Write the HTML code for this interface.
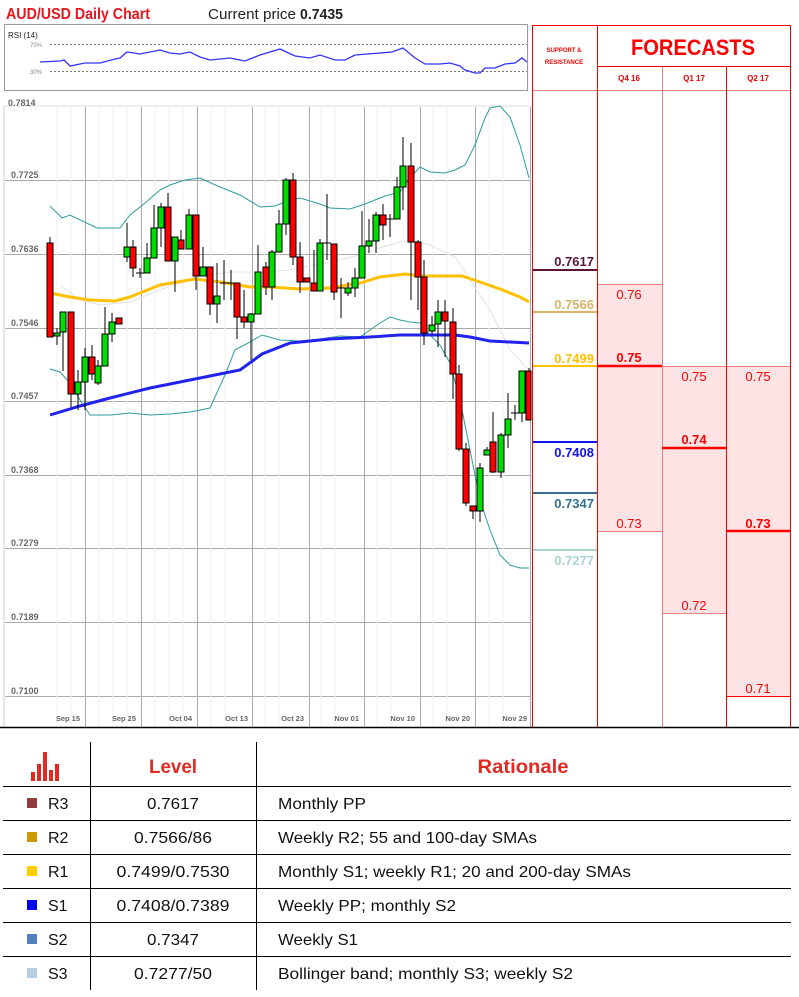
<!DOCTYPE html>
<html><head><meta charset="utf-8"><style>
html,body{margin:0;padding:0;background:#fff;}
svg{display:block;font-family:"Liberation Sans",sans-serif;}
</style></head><body>
<svg width="799" height="997" viewBox="0 0 799 997" xmlns="http://www.w3.org/2000/svg">
<rect width="799" height="997" fill="#fff"/>
<!-- title -->
<text x="6" y="19" font-size="16" font-weight="bold" fill="#e8141e" textLength="144" lengthAdjust="spacingAndGlyphs">AUD/USD Daily Chart</text>
<text x="208" y="19" font-size="15" fill="#222" textLength="88" lengthAdjust="spacingAndGlyphs">Current price</text>
<text x="300" y="19" font-size="15" font-weight="bold" fill="#222" textLength="43" lengthAdjust="spacingAndGlyphs">0.7435</text>

<!-- RSI box -->
<rect x="4.5" y="24.5" width="523" height="66" fill="#fff" stroke="#999"/>
<text x="8" y="38" font-size="8" fill="#222">RSI (14)</text>
<text x="30" y="47" font-size="6" fill="#888">70%</text>
<text x="30" y="74" font-size="6" fill="#888">30%</text>
<line x1="50" y1="44.5" x2="527" y2="44.5" stroke="#777" stroke-dasharray="2,2"/>
<line x1="50" y1="71.5" x2="527" y2="71.5" stroke="#777" stroke-dasharray="2,2"/>
<polyline fill="none" stroke="#3333ff" stroke-width="1.3" points="40,62 60,61 64,60 70,66 85,63 100,63 115,59 120,58 127,52 140,54 160,50 170,53 180,54 190,52 200,57 210,60 230,58 245,61 255,57 260,55 280,49 295,56 310,58 320,55 335,60 345,60 355,55 380,53 392,52 403,48 415,58 425,64 440,64 450,63 460,66 465,70 475,73 480,73 485,68 495,68 500,66 505,64 515,63 522,58 527,62"/>

<!-- main chart frame -->
<line x1="4" y1="106" x2="4" y2="727" stroke="#ccc"/>
<line x1="4" y1="106" x2="531" y2="106" stroke="#ddd"/>
<text x="8" y="106" font-size="9" font-weight="bold" fill="#666">0.7814</text>
<!-- horizontal grid -->
<g stroke="#aaa" stroke-width="1">
<line x1="5" y1="180.5" x2="531" y2="180.5"/>
<line x1="5" y1="254.5" x2="531" y2="254.5"/>
<line x1="5" y1="328.5" x2="531" y2="328.5"/>
<line x1="5" y1="401.5" x2="531" y2="401.5"/>
<line x1="5" y1="475.5" x2="531" y2="475.5"/>
<line x1="5" y1="548.5" x2="531" y2="548.5"/>
<line x1="5" y1="622.5" x2="531" y2="622.5"/>
<line x1="5" y1="696.5" x2="531" y2="696.5"/>
</g>
<g font-size="9" font-weight="bold" fill="#666">
<text x="11" y="178">0.7725</text>
<text x="11" y="252">0.7636</text>
<text x="11" y="326">0.7546</text>
<text x="11" y="399">0.7457</text>
<text x="11" y="473">0.7368</text>
<text x="11" y="546">0.7279</text>
<text x="11" y="620">0.7189</text>
<text x="11" y="694">0.7100</text>
</g>
<!-- vertical grid -->
<g stroke="#f0f0f0">
<line x1="57" y1="107" x2="57" y2="727"/><line x1="71" y1="107" x2="71" y2="727"/><line x1="99" y1="107" x2="99" y2="727"/><line x1="113" y1="107" x2="113" y2="727"/><line x1="127" y1="107" x2="127" y2="727"/><line x1="155" y1="107" x2="155" y2="727"/><line x1="169" y1="107" x2="169" y2="727"/><line x1="183" y1="107" x2="183" y2="727"/><line x1="211" y1="107" x2="211" y2="727"/><line x1="225" y1="107" x2="225" y2="727"/><line x1="265" y1="107" x2="265" y2="727"/><line x1="279" y1="107" x2="279" y2="727"/><line x1="321" y1="107" x2="321" y2="727"/><line x1="335" y1="107" x2="335" y2="727"/><line x1="377" y1="107" x2="377" y2="727"/><line x1="391" y1="107" x2="391" y2="727"/><line x1="433" y1="107" x2="433" y2="727"/><line x1="447" y1="107" x2="447" y2="727"/><line x1="489" y1="107" x2="489" y2="727"/><line x1="503" y1="107" x2="503" y2="727"/>
</g>
<g stroke="#aaa">
<line x1="85.5" y1="107" x2="85.5" y2="727"/><line x1="141.5" y1="107" x2="141.5" y2="727"/><line x1="197.5" y1="107" x2="197.5" y2="727"/><line x1="252.5" y1="107" x2="252.5" y2="727"/><line x1="309.5" y1="107" x2="309.5" y2="727"/><line x1="364.5" y1="107" x2="364.5" y2="727"/><line x1="420.5" y1="107" x2="420.5" y2="727"/><line x1="475.5" y1="107" x2="475.5" y2="727"/><line x1="530.5" y1="107" x2="530.5" y2="727"/>
</g>
<g font-size="7.5" fill="#666" text-anchor="end" font-weight="bold">
<text x="80" y="721">Sep 15</text><text x="136" y="721">Sep 25</text><text x="192" y="721">Oct 04</text><text x="248" y="721">Oct 13</text><text x="304" y="721">Oct 23</text><text x="359" y="721">Nov 01</text><text x="415" y="721">Nov 10</text><text x="470" y="721">Nov 20</text><text x="527" y="721">Nov 29</text>
</g>

<!-- middle band -->
<polyline fill="none" stroke="#e3e3e3" stroke-width="1" points="60,285 80,300 100,305 130,302 160,290 195,277 230,272 260,272 290,270 330,262 360,255 380,248 400,242 415,241 430,245 455,257 470,280 490,310 510,350 529,370"/>
<!-- bollinger -->
<polyline fill="none" stroke="#2e9c9c" stroke-width="1" points="50,206 62,218 70,215 97,228 120,228 130,215 145,203 160,190 170,185 185,180 200,178 220,187 240,195 260,207 275,206 290,200 300,198 320,204 330,208 350,209 365,204 385,196 400,192 408,180 420,167 430,172 445,173 455,170 465,165 475,145 485,118 490,108 500,106 510,117 520,145 529,178"/>
<polyline fill="none" stroke="#2e9c9c" stroke-width="1" points="50,369 60,372 70,383 80,400 90,415 110,415 130,413 150,415 170,414 190,412 210,408 225,375 235,350 250,342 262,335 280,340 300,341 320,339 340,336 360,337 380,323 390,317 400,320 410,322 420,323 430,335 440,345 450,363 460,400 470,450 480,500 490,530 500,555 510,565 520,568 529,568"/>
<!-- SMAs -->
<polyline fill="none" stroke="#ffc000" stroke-width="3" points="50,293 70,297 90,300 115,301 130,297 160,285 195,279 220,282 250,287 270,287 300,289 330,288 360,283 380,277 405,274 420,276 450,276 462,276 480,282 500,289 520,297 529,302"/>
<polyline fill="none" stroke="#2222ee" stroke-width="3" points="50,415 80,406 110,398 150,388 200,378 240,370 262,354 290,343 330,339 370,337 400,335 455,335 470,337 490,341 510,342 529,343"/>

<!-- candles -->
<g stroke="#000" stroke-width="1">
<line x1="50" y1="237" x2="50" y2="337"/><rect x="47" y="243" width="6" height="94" fill="#f00"/>
<line x1="57" y1="328" x2="57" y2="345"/><rect x="54" y="333" width="6" height="3" fill="#0d0"/>
<line x1="63" y1="312" x2="63" y2="371"/><rect x="60" y="312" width="6" height="20" fill="#0d0"/>
<line x1="71" y1="312" x2="71" y2="407"/><rect x="68" y="312" width="6" height="82" fill="#f00"/>
<line x1="78" y1="370" x2="78" y2="410"/><rect x="75" y="382" width="6" height="12" fill="#0d0"/>
<line x1="85" y1="348" x2="85" y2="410"/><rect x="82" y="357" width="6" height="25" fill="#0d0"/>
<line x1="92" y1="345" x2="92" y2="380"/><rect x="89" y="357" width="6" height="17" fill="#f00"/>
<line x1="98" y1="360" x2="98" y2="385"/><rect x="95" y="366" width="6" height="17" fill="#0d0"/>
<line x1="105" y1="307" x2="105" y2="366"/><rect x="102" y="334" width="6" height="32" fill="#0d0"/>
<line x1="112" y1="313" x2="112" y2="342"/><rect x="109" y="322" width="6" height="12" fill="#0d0"/>
<rect x="116" y="318" width="6" height="6" fill="#f00"/>
<line x1="127" y1="223" x2="127" y2="262"/><rect x="124" y="247" width="6" height="10" fill="#0d0"/>
<line x1="133" y1="240" x2="133" y2="277"/><rect x="130" y="247" width="6" height="21" fill="#f00"/>
<line x1="140" y1="268" x2="140" y2="278"/><line x1="136" y1="273" x2="144" y2="273"/>
<line x1="147" y1="243" x2="147" y2="273"/><rect x="144" y="258" width="6" height="15" fill="#0d0"/>
<line x1="154" y1="205" x2="154" y2="258"/><rect x="151" y="228" width="6" height="30" fill="#0d0"/>
<line x1="161" y1="203" x2="161" y2="247"/><rect x="158" y="207" width="6" height="21" fill="#0d0"/>
<line x1="168" y1="193" x2="168" y2="261"/><rect x="165" y="207" width="6" height="54" fill="#f00"/>
<line x1="175" y1="237" x2="175" y2="292"/><rect x="172" y="237" width="6" height="24" fill="#0d0"/>
<line x1="181" y1="230" x2="181" y2="249"/><rect x="178" y="240" width="6" height="9" fill="#f00"/>
<line x1="189" y1="209" x2="189" y2="249"/><rect x="186" y="215" width="6" height="34" fill="#0d0"/>
<line x1="196" y1="215" x2="196" y2="290"/><rect x="193" y="215" width="6" height="61" fill="#f00"/>
<line x1="203" y1="247" x2="203" y2="276"/><rect x="200" y="267" width="6" height="9" fill="#0d0"/>
<line x1="210" y1="267" x2="210" y2="315"/><rect x="207" y="267" width="6" height="37" fill="#f00"/>
<line x1="217" y1="263" x2="217" y2="323"/><rect x="214" y="296" width="6" height="8" fill="#0d0"/>
<line x1="224" y1="260" x2="224" y2="300"/><line x1="220" y1="283" x2="228" y2="283"/>
<line x1="231" y1="270" x2="231" y2="300"/><line x1="227" y1="283" x2="235" y2="283"/>
<line x1="237" y1="283" x2="237" y2="339"/><rect x="234" y="283" width="6" height="34" fill="#f00"/>
<line x1="244" y1="290" x2="244" y2="328"/><rect x="241" y="317" width="6" height="5" fill="#f00"/>
<line x1="251" y1="313" x2="251" y2="360"/><rect x="248" y="314" width="6" height="8" fill="#0d0"/>
<line x1="258" y1="245" x2="258" y2="314"/><rect x="255" y="272" width="6" height="42" fill="#0d0"/>
<line x1="266" y1="262" x2="266" y2="295"/><rect x="263" y="267" width="6" height="20" fill="#f00"/>
<line x1="272" y1="250" x2="272" y2="300"/><rect x="269" y="252" width="6" height="35" fill="#0d0"/>
<line x1="279" y1="210" x2="279" y2="252"/><rect x="276" y="224" width="6" height="28" fill="#0d0"/>
<line x1="286" y1="178" x2="286" y2="235"/><rect x="283" y="180" width="6" height="44" fill="#0d0"/>
<line x1="293" y1="173" x2="293" y2="265"/><rect x="290" y="180" width="6" height="77" fill="#f00"/>
<line x1="300" y1="242" x2="300" y2="293"/><rect x="297" y="257" width="6" height="25" fill="#f00"/>
<rect x="304" y="278" width="6" height="4" fill="#f00"/>
<line x1="314" y1="250" x2="314" y2="291"/><rect x="311" y="283" width="6" height="8" fill="#f00"/>
<line x1="320" y1="239" x2="320" y2="291"/><rect x="317" y="243" width="6" height="48" fill="#0d0"/>
<line x1="327" y1="194" x2="327" y2="260"/><line x1="323" y1="243" x2="331" y2="243"/>
<line x1="334" y1="244" x2="334" y2="300"/><rect x="331" y="244" width="6" height="48" fill="#f00"/>
<line x1="341" y1="278" x2="341" y2="318"/><line x1="337" y1="288" x2="345" y2="288"/>
<line x1="348" y1="282" x2="348" y2="296"/><rect x="345" y="288" width="6" height="5" fill="#0d0"/>
<line x1="355" y1="268" x2="355" y2="297"/><rect x="352" y="278" width="6" height="10" fill="#0d0"/>
<line x1="362" y1="211" x2="362" y2="278"/><rect x="359" y="246" width="6" height="32" fill="#0d0"/>
<line x1="369" y1="219" x2="369" y2="253"/><rect x="366" y="241" width="6" height="5" fill="#0d0"/>
<line x1="376" y1="212" x2="376" y2="253"/><rect x="373" y="215" width="6" height="26" fill="#0d0"/>
<line x1="383" y1="204" x2="383" y2="240"/><rect x="380" y="215" width="6" height="10" fill="#f00"/>
<line x1="390" y1="214" x2="390" y2="237"/><line x1="386" y1="219" x2="394" y2="219"/>
<line x1="397" y1="177" x2="397" y2="219"/><rect x="394" y="187" width="6" height="32" fill="#0d0"/>
<line x1="403" y1="137" x2="403" y2="210"/><rect x="400" y="166" width="6" height="21" fill="#0d0"/>
<line x1="411" y1="143" x2="411" y2="300"/><rect x="408" y="166" width="6" height="76" fill="#f00"/>
<line x1="418" y1="240" x2="418" y2="310"/><rect x="415" y="242" width="6" height="35" fill="#f00"/>
<line x1="424" y1="260" x2="424" y2="345"/><rect x="421" y="277" width="6" height="56" fill="#f00"/>
<line x1="432" y1="316" x2="432" y2="334"/><rect x="429" y="325" width="6" height="6" fill="#0d0"/>
<line x1="438" y1="300" x2="438" y2="347"/><rect x="435" y="312" width="6" height="12" fill="#0d0"/>
<line x1="445" y1="300" x2="445" y2="357"/><rect x="442" y="312" width="6" height="9" fill="#f00"/>
<line x1="453" y1="308" x2="453" y2="399"/><rect x="450" y="322" width="6" height="52" fill="#f00"/>
<line x1="459" y1="365" x2="459" y2="451"/><rect x="456" y="374" width="6" height="75" fill="#f00"/>
<line x1="466" y1="443" x2="466" y2="506"/><rect x="463" y="449" width="6" height="54" fill="#f00"/>
<line x1="473" y1="506" x2="473" y2="519"/><rect x="470" y="506" width="6" height="5" fill="#f00"/>
<line x1="480" y1="463" x2="480" y2="522"/><rect x="477" y="468" width="6" height="43" fill="#0d0"/>
<line x1="487" y1="447" x2="487" y2="455"/><rect x="484" y="450" width="6" height="5" fill="#0d0"/>
<line x1="493" y1="412" x2="493" y2="473"/><rect x="490" y="442" width="6" height="30" fill="#f00"/>
<line x1="501" y1="433" x2="501" y2="478"/><rect x="498" y="435" width="6" height="37" fill="#0d0"/>
<line x1="508" y1="393" x2="508" y2="448"/><rect x="505" y="419" width="6" height="16" fill="#0d0"/>
<line x1="515" y1="405" x2="515" y2="420"/><line x1="511" y1="413" x2="519" y2="413"/>
<line x1="522" y1="371" x2="522" y2="422"/><rect x="519" y="371" width="6" height="42" fill="#0d0"/>
<line x1="529" y1="368" x2="529" y2="420"/><rect x="526" y="371" width="5" height="49" fill="#f00"/>
</g>

<!-- forecast panel -->
<rect x="597" y="284" width="65" height="247" fill="#fde3e4"/>
<rect x="662" y="366" width="64" height="247" fill="#fde3e4"/>
<rect x="726" y="366" width="64" height="330" fill="#fde3e4"/>
<g stroke="#f08080" stroke-width="1">
<line x1="597" y1="284.5" x2="662" y2="284.5"/>
<line x1="597" y1="531.5" x2="662" y2="531.5"/>
<line x1="662" y1="366.5" x2="790" y2="366.5"/>
<line x1="662" y1="613.5" x2="726" y2="613.5"/>
<line x1="532" y1="90.5" x2="790" y2="90.5"/>
<line x1="662.5" y1="66" x2="662.5" y2="727"/>
</g>
<line x1="726" y1="696.5" x2="790" y2="696.5" stroke="#f00"/>
<g stroke="#f00" stroke-width="1">
<line x1="532.5" y1="25" x2="532.5" y2="727"/>
<line x1="597.5" y1="25" x2="597.5" y2="727"/>
<line x1="726.5" y1="66" x2="726.5" y2="727"/>
<line x1="790.5" y1="25" x2="790.5" y2="727"/>
<line x1="532" y1="25.5" x2="791" y2="25.5"/>
<line x1="597" y1="66.5" x2="791" y2="66.5"/>
</g>
<g stroke="#f00" stroke-width="2.5">
<line x1="597" y1="366" x2="662" y2="366"/>
<line x1="662" y1="448" x2="726" y2="448"/>
<line x1="726" y1="531" x2="790" y2="531"/>
</g>
<text x="693" y="55" font-size="22" font-weight="bold" fill="#f00" text-anchor="middle" textLength="124" lengthAdjust="spacingAndGlyphs">FORECASTS</text>
<text x="564" y="52" font-size="6" font-weight="bold" fill="#e00" text-anchor="middle">SUPPORT &amp;</text>
<text x="564" y="64" font-size="6" font-weight="bold" fill="#e00" text-anchor="middle">RESISTANCE</text>
<g font-size="8" font-weight="bold" fill="#e00" text-anchor="middle">
<text x="629" y="81">Q4 16</text><text x="694" y="81">Q1 17</text><text x="758" y="81">Q2 17</text>
</g>
<g font-size="13" fill="#f00" text-anchor="middle">
<text x="629" y="299">0.76</text>
<text x="629" y="528">0.73</text>
<text x="694" y="381">0.75</text>
<text x="694" y="610">0.72</text>
<text x="758" y="381">0.75</text>
<text x="758" y="693">0.71</text>
</g>
<g font-size="13" font-weight="bold" fill="#f00" text-anchor="middle">
<text x="629" y="362">0.75</text>
<text x="694" y="444">0.74</text>
<text x="758" y="528">0.73</text>
</g>
<!-- S/R -->
<g stroke-width="2">
<line x1="533" y1="270" x2="597" y2="270" stroke="#5c1436"/>
<line x1="533" y1="312" x2="597" y2="312" stroke="#d9b36a"/>
<line x1="533" y1="366" x2="597" y2="366" stroke="#ffc000"/>
<line x1="533" y1="442" x2="597" y2="442" stroke="#1010ee"/>
<line x1="533" y1="493" x2="597" y2="493" stroke="#31708f"/>
<line x1="533" y1="550" x2="597" y2="550" stroke="#a9d3d3"/>
</g>
<g font-size="13" font-weight="bold" text-anchor="end">
<text x="594" y="266" fill="#5c1436">0.7617</text>
<text x="594" y="309" fill="#d9b36a">0.7566</text>
<text x="594" y="363" fill="#ffc000">0.7499</text>
<text x="594" y="457" fill="#1010ee">0.7408</text>
<text x="594" y="508" fill="#31708f">0.7347</text>
<text x="594" y="565" fill="#a9d3d3">0.7277</text>
</g>
<line x1="0" y1="727.5" x2="799" y2="727.5" stroke="#000" stroke-width="1.5"/>

<!-- table -->
<g stroke="#000" stroke-width="1">
<line x1="90.5" y1="742" x2="90.5" y2="990"/>
<line x1="256.5" y1="742" x2="256.5" y2="990"/>
<line x1="3" y1="786.5" x2="791" y2="786.5"/>
<line x1="3" y1="820.5" x2="791" y2="820.5"/>
<line x1="3" y1="854.5" x2="791" y2="854.5"/>
<line x1="3" y1="888.5" x2="791" y2="888.5"/>
<line x1="3" y1="922.5" x2="791" y2="922.5"/>
<line x1="3" y1="956.5" x2="791" y2="956.5"/>
</g>
<g fill="#e02a22">
<rect x="31" y="772" width="4" height="9"/><rect x="37" y="764" width="4" height="17"/><rect x="43" y="752" width="4" height="29"/><rect x="49" y="770" width="4" height="11"/><rect x="55" y="764" width="4" height="17"/>
</g>
<text x="173" y="773" font-size="19" font-weight="bold" fill="#e02a22" text-anchor="middle" textLength="48" lengthAdjust="spacingAndGlyphs">Level</text>
<text x="523" y="773" font-size="19" font-weight="bold" fill="#e02a22" text-anchor="middle" textLength="91" lengthAdjust="spacingAndGlyphs">Rationale</text>
<rect x="27" y="798" width="10" height="10" fill="#943c3c"/>
<rect x="27" y="832" width="10" height="10" fill="#cc9900"/>
<rect x="27" y="866" width="10" height="10" fill="#ffcc00"/>
<rect x="27" y="900" width="10" height="10" fill="#0000ee"/>
<rect x="27" y="934" width="10" height="10" fill="#4f81bd"/>
<rect x="27" y="968" width="10" height="10" fill="#b8cce4"/>
<g font-size="16" fill="#111">
<text x="48" y="809">R3</text><text x="48" y="843">R2</text><text x="48" y="877">R1</text><text x="48" y="911">S1</text><text x="48" y="945">S2</text><text x="48" y="979">S3</text>
</g>
<g font-size="16" fill="#111" text-anchor="middle">
<text x="173" y="809" textLength="52" lengthAdjust="spacingAndGlyphs">0.7617</text>
<text x="173" y="843" textLength="78" lengthAdjust="spacingAndGlyphs">0.7566/86</text>
<text x="173" y="877" textLength="113" lengthAdjust="spacingAndGlyphs">0.7499/0.7530</text>
<text x="173" y="911" textLength="113" lengthAdjust="spacingAndGlyphs">0.7408/0.7389</text>
<text x="173" y="945" textLength="52" lengthAdjust="spacingAndGlyphs">0.7347</text>
<text x="173" y="979" textLength="78" lengthAdjust="spacingAndGlyphs">0.7277/50</text>
</g>
<g font-size="16" fill="#111">
<text x="278" y="809" textLength="88" lengthAdjust="spacingAndGlyphs">Monthly PP</text>
<text x="278" y="843" textLength="259" lengthAdjust="spacingAndGlyphs">Weekly R2; 55 and 100-day SMAs</text>
<text x="278" y="877" textLength="353" lengthAdjust="spacingAndGlyphs">Monthly S1; weekly R1; 20 and 200-day SMAs</text>
<text x="278" y="911" textLength="178" lengthAdjust="spacingAndGlyphs">Weekly PP; monthly S2</text>
<text x="278" y="945" textLength="80" lengthAdjust="spacingAndGlyphs">Weekly S1</text>
<text x="278" y="979" textLength="295" lengthAdjust="spacingAndGlyphs">Bollinger band; monthly S3; weekly S2</text>
</g>
</svg>
</body></html>
